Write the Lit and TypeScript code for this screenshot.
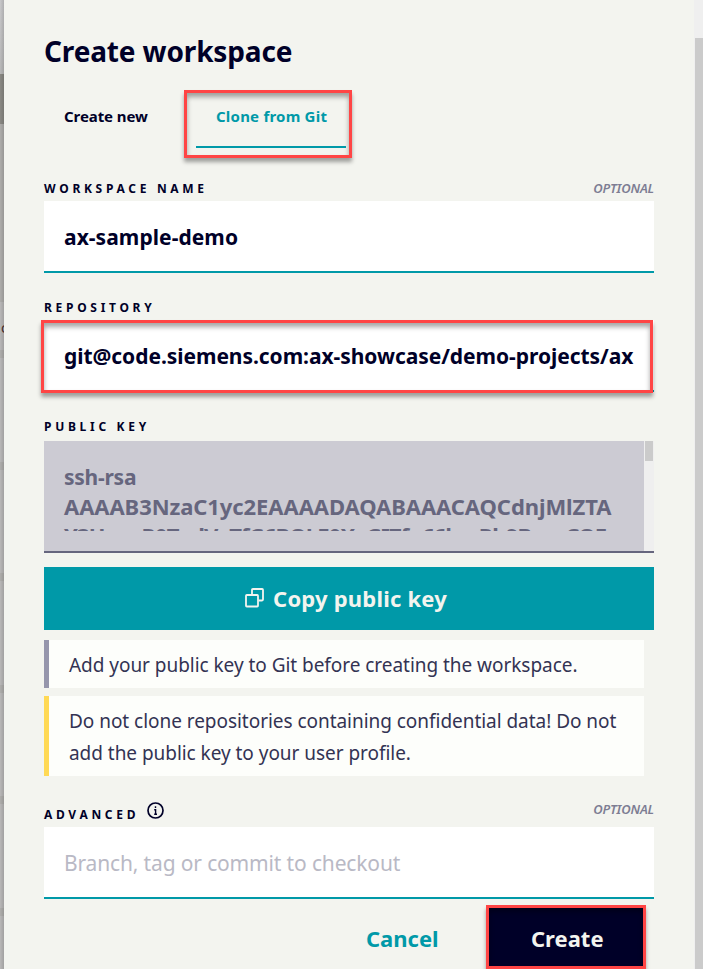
import { LitElement, html, css } from "lit";
import { customElement } from "lit/decorators.js";

@customElement("app-root")
export class AppRoot extends LitElement {
  static styles = css`
    :host {
      display: flex;
      height: 969px;
      width: 703px;
      overflow: hidden;
      position: relative;
      background: #f3f4ef;
      color: #000028;
      font-family: "Noto Sans", "Open Sans", sans-serif;
      font-weight: 700;
    }
    *, *::after { box-sizing: border-box; }
    .backdrop {
      flex: none;
      width: 4px;
      height: 969px;
      display: flex;
      flex-direction: column;
      overflow: hidden;
      background: #b9b8b8;
      position: relative;
    }
    .backdrop::after {
      content: "";
      position: absolute;
      inset: 0;
      background: linear-gradient(90deg, transparent, rgba(0, 0, 0, 0.13));
    }
    .bar { flex: none; height: 8px; background: #afaeac; margin-top: 103.5px; }
    .top { height: 74px; margin: 0; background: linear-gradient(#c9c9cb, #b9b9b9); }
    .head { height: 50px; margin: 0; background: #8a8984; }
    .body { height: 178px; margin: 0; background: #aeadab; }
    .letter {
      flex: none;
      height: 48px;
      font-size: 14px;
      line-height: 52px;
      font-weight: 400;
      padding-left: 1px;
      color: #4a3030;
    }
    .first { margin: 0; }
    .panel { width: 690px; flex: none; padding: 0 40px; display: flex; flex-direction: column; }
    .track { flex: none; width: 9px; background: #efefef; padding: 38px 0 0 1px; }
    .thumb { height: 931px; background: #cbcbcb; }
    h1 {
      margin: 31px 0 0;
      height: 40px;
      line-height: 40px;
      font-size: 28px;
      font-weight: 700;
      letter-spacing: -0.14px;
      white-space: nowrap;
    }
    .tabs { display: flex; margin-top: 19px; height: 68px; }
    .tab { font-size: 15px; line-height: 20px; padding: 16px 20px 0; width: 140px; white-space: nowrap; letter-spacing: -0.08px; }
    .mark {
      border: 3px solid #ff4545;
      box-shadow: 0 4px 4px rgba(0, 0, 0, 0.35), inset 0 4px 5px rgba(0, 0, 0, 0.35);
    }
    .tab.on { width: 168px; padding: 13px 3px 0 9px; color: #0099a8; letter-spacing: 0.22px; }
    .on div { height: 42px; border-bottom: 2px solid #0099a8; padding-left: 20px; }
    .row { display: flex; justify-content: space-between; height: 20px; line-height: 16px; margin-top: 27px; }
    .row.name { margin-top: 23px; }
    .name .opt { line-height: 14px; }
    .row.pub { height: 22px; }
    .row.adv { height: 31px; margin-top: 20px; line-height: 26px; }
    .label { font-size: 12px; letter-spacing: 3.7px; white-space: nowrap; display: flex; }
    .adv .label { line-height: 37px; }
    .info { margin: 6px 0 0 8px; }
    .opt { font-size: 13px; font-style: italic; font-weight: 600; color: #7d7d93; letter-spacing: -0.15px; }
    .field {
      height: 72px;
      background: #fff;
      border-bottom: 2px solid #0099a8;
      padding: 0 20px;
      font-size: 21px;
      line-height: 72px;
      white-space: nowrap;
      position: relative;
      letter-spacing: 0.06px;
    }
    .repo { letter-spacing: -0.05px; }
    .repo::after {
      content: "";
      position: absolute;
      left: -3px;
      top: 0;
      width: 612px;
      height: 73px;
      border: 3px solid #ff4545;
      box-shadow: 0 4px 4px rgba(0, 0, 0, 0.35), inset 0 4px 5px rgba(0, 0, 0, 0.35);
    }
    .key {
      height: 112px;
      display: flex;
      background: #cccbd3;
      border-bottom: 2px solid #66667e;
      color: #66667e;
    }
    .lines {
      width: 600px;
      height: 90px;
      overflow: hidden;
      padding: 21px 20px 0;
      font-size: 22px;
      line-height: 30px;
      white-space: nowrap;
      letter-spacing: -0.08px;
    }
    .type { font-size: 21px; letter-spacing: -0.25px; }
    .tail { letter-spacing: -0.85px; }
    .line { height: 29px; }
    .keytrack { width: 10px; background: #efefef; padding: 0 1px; }
    .keythumb { height: 20px; background: #cbcbcb; }
    .copy {
      margin-top: 14px;
      height: 63px;
      background: #0099a8;
      color: #f3f4ef;
      display: flex;
      justify-content: center;
      align-items: center;
      gap: 8px;
      padding: 0 6px 2px 0;
      font-size: 22px;
      letter-spacing: 0.2px;
      white-space: nowrap;
    }
    .note {
      width: 600px;
      height: 48px;
      margin-top: 10px;
      border-left: 5px solid #9696ac;
      background: #fdfefb;
      color: #333353;
      padding: 9px 20px 0;
      font-size: 19px;
      font-weight: 400;
      line-height: 32px;
      letter-spacing: -0.04px;
      white-space: nowrap;
    }
    .warn { border-color: #ffd955; height: 80px; margin-top: 8px; }
    .holder { font-weight: 400; color: #b9b9c5; letter-spacing: -0.15px; }
    .footer { display: flex; height: 64px; margin-top: 6px; font-size: 22px; line-height: 64px; white-space: nowrap; }
    .cancel { width: 442px; padding-left: 322px; color: #0099a8; line-height: 67px; }
    .create { width: 160px; background: #000028; color: #f3f4ef; padding-left: 42px; line-height: 61px; }
    svg { display: block; flex: none; }
  `;

  render() {
    return html`
      <div class="backdrop">
        <div class="bar top"></div>
        <div class="bar head"></div>
        <div class="bar body"></div>
        <div class="letter">c</div>
        <div class="bar first"></div>
        <div class="bar"></div>
        <div class="bar"></div>
        <div class="bar"></div>
        <div class="bar"></div>
        <div class="bar"></div>
      </div>
      <main class="panel">
        <h1>Create workspace</h1>
        <div class="tabs">
          <div class="tab">Create new</div>
          <div class="tab on mark"><div>Clone from Git</div></div>
        </div>
        <div class="row name"><span class="label">WORKSPACE NAME</span><span class="opt">OPTIONAL</span></div>
        <div class="field">ax-sample-demo</div>
        <div class="row"><span class="label">REPOSITORY</span></div>
        <div class="field repo">git@code.siemens.com:ax-showcase/demo-projects/ax</div>
        <div class="row pub"><span class="label">PUBLIC KEY</span></div>
        <div class="key">
          <div class="lines">
            <div class="line type">ssh-rsa</div>
            <div class="line">AAAAB3NzaC1yc2EAAAADAQABAAACAQCdnjMlZTA</div>
            <div class="line tail">Y3UyxnR0TudVyTfG6BQLE0XyGIZfu66kmRh9BmnCQE</div>
          </div>
          <div class="keytrack"><div class="keythumb"></div></div>
        </div>
        <div class="copy">
          <svg width="20" height="20" viewBox="0 0 20 20" fill="none" stroke="currentColor" stroke-width="1.8">
            <path d="M7 6.5V1.9Q7 1 7.9 1H17.1Q18 1 18 1.9V11.6Q18 12.5 17.1 12.5H13.5" />
            <rect x="1" y="7" width="12" height="11.5" rx=".8" />
          </svg>
          <span>Copy public key</span>
        </div>
        <div class="note">Add your public key to Git before creating the workspace.</div>
        <div class="note warn">Do not clone repositories containing confidential data! Do not<br />add the public key to your user profile.</div>
        <div class="row adv">
          <span class="label">ADVANCED
            <svg class="info" width="17" height="17" viewBox="0 0 17 17" fill="none" stroke="currentColor">
              <circle cx="8.5" cy="8.5" r="7.5" stroke-width="1.7" />
              <path d="M8.5 4.2V6M7.2 7.7H8.6V12M7.2 12.2H10" stroke-width="1.4" />
            </svg>
          </span>
          <span class="opt">OPTIONAL</span>
        </div>
        <div class="field holder">Branch, tag or commit to checkout</div>
        <div class="footer"><span class="cancel">Cancel</span><span class="create mark">Create</span></div>
      </main>
      <div class="track"><div class="thumb"></div></div>
    `;
  }
}
